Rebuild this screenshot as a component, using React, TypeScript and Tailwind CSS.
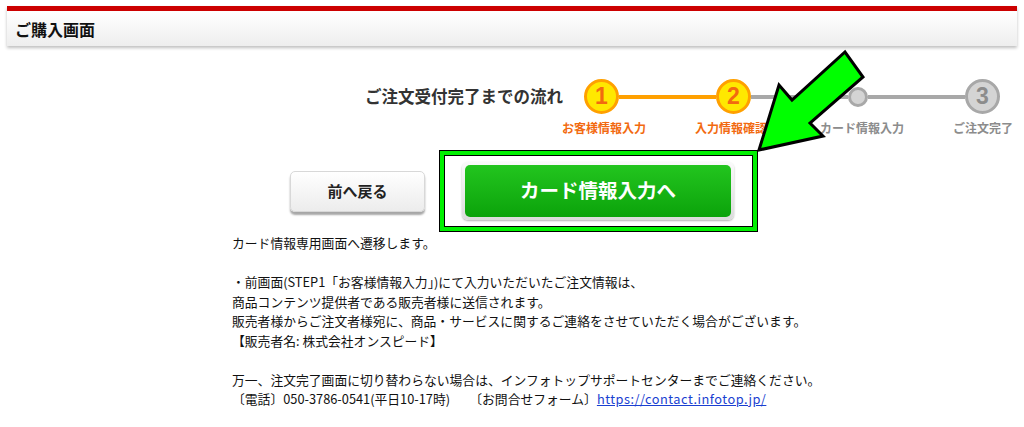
import React from "react";

const jp = "font-['Noto_Sans_CJK_JP','Noto_Sans',sans-serif]";

const StepCircle: React.FC<{ n: string; active?: boolean }> = ({ n, active }) => (
  <div
    className={`w-[35px] h-[35px] shrink-0 rounded-full border-[3px] flex items-center justify-center text-[23px] font-bold leading-none font-['Liberation_Sans',sans-serif] ${
      active ? "bg-[#ffe800] border-[#ffa000] text-[#f26a10]" : "bg-[#d4d4d4] border-[#a8a8a8] text-[#8c8c8c]"
    }`}
  >
    {n}
  </div>
);

const Arrow: React.FC = () => (
  <svg className="absolute left-0 top-0 pointer-events-none" width="1024" height="427">
    <polygon
      points="759,150 779,85 792,100 845,52 863,77 810,123 823,136"
      fill="#00ff00"
      stroke="#000"
      strokeWidth="3"
      strokeLinejoin="miter"
    />
  </svg>
);

export default function App() {
  return (
    <div className={`relative w-[1024px] h-[427px] bg-white overflow-hidden ${jp}`}>
      {/* header */}
      <div className="pt-[6px] px-[7px]">
        <div className="border-t-[5px] border-[#cc0000] h-[40px] bg-gradient-to-b from-white to-[#eeeeee] shadow-[0_2px_3px_rgba(0,0,0,0.25)] flex items-center pl-[8px]">
          <span className="text-[16px] font-bold text-[#111] leading-none">ご購入画面</span>
        </div>
      </div>

      {/* flow */}
      <div className="mt-[33px] flex pl-[365px]">
        <div className="w-[200px] h-[35px] flex items-center">
          <span className="text-[16.5px] font-bold text-[#333]">ご注文受付完了までの流れ</span>
        </div>
        <div className="ml-[19px] w-[416px]">
          <div className="flex items-center">
            <StepCircle n="1" active />
            <div className="flex-1 h-[4px] bg-[#ffa000]" />
            <StepCircle n="2" active />
            <div className="flex-1 h-[4px] bg-[#a8a8a8]" />
            <div className="w-[20px] h-[20px] shrink-0 rounded-full bg-[#d4d4d4] border-[3px] border-[#a8a8a8]" />
            <div className="flex-1 h-[4px] bg-[#a8a8a8]" />
            <StepCircle n="3" />
          </div>
          <div className="flex mt-[6px] text-[12px] font-bold leading-[16px] -ml-[44px]">
            <div className="w-[128px] shrink-0 text-center text-[#f26a10]">お客様情報入力</div>
            <div className="w-[126px] shrink-0 text-center text-[#f26a10]">入力情報確認</div>
            <div className="w-[136px] shrink-0 text-center text-[#8c8c8c]">カード情報入力</div>
            <div className="w-[106px] shrink-0 text-center text-[#8c8c8c]">ご注文完了</div>
          </div>
        </div>
      </div>

      {/* buttons */}
      <div className="mt-[14px] flex items-center pl-[290px] gap-[14px]">
        <button className="w-[135px] h-[41px] rounded-[5px] border border-[#d8d8d8] bg-gradient-to-b from-white to-[#ececec] shadow-[0_3px_2px_rgba(0,0,0,0.35)] text-[15px] font-bold text-[#222]">
          前へ戻る
        </button>
        <div className="border border-black">
          <div className="border-[4px] border-[#00f000]">
            <div className="border border-black bg-white w-[309px] h-[72px] pl-[17px] pt-[6px]">
              <div className="w-[272px] h-[58px] rounded-[6px] bg-gradient-to-b from-[#fafafa] to-[#dcdcdc] p-[3px] shadow-[0_1px_2px_rgba(0,0,0,0.3)]">
                <div className="w-full h-full rounded-[5px] bg-gradient-to-b from-[#22c51e] to-[#0aa30a] flex items-center justify-center text-white text-[19.5px] font-bold pb-[3px]">
                  カード情報入力へ
                </div>
              </div>
            </div>
          </div>
        </div>
      </div>

      {/* notes */}
      <div className="mt-[1px] pl-[232px] text-[12.8px] leading-[19.5px] text-[#111]">
        <p>カード情報専用画面へ遷移します。</p>
        <p>&nbsp;</p>
        <p>・前画面(STEP1「お客様情報入力」)にて入力いただいたご注文情報は、</p>
        <p>商品コンテンツ提供者である販売者様に送信されます。</p>
        <p>販売者様からご注文者様宛に、商品・サービスに関するご連絡をさせていただく場合がございます。</p>
        <p>【販売者名: 株式会社オンスピード】</p>
        <p>&nbsp;</p>
        <p>万一、注文完了画面に切り替わらない場合は、インフォトップサポートセンターまでご連絡ください。</p>
        <p>
          〔電話〕050-3786-0541(平日10-17時)　　〔お問合せフォーム〕
          <a href="#" className="text-[#1a3fd1] underline tracking-[0.5px]">https://contact.infotop.jp/</a>
        </p>
      </div>

      <Arrow />
    </div>
  );
}
